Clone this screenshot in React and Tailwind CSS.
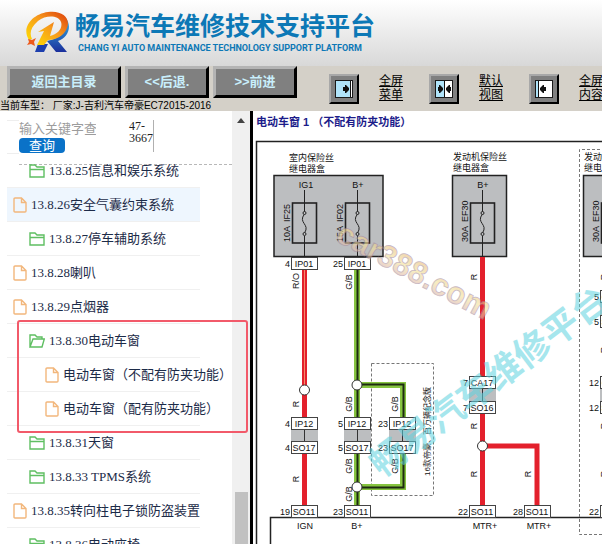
import React from 'react';

const navButtons = ['返回主目录', '<<后退.', '>>前进'];

const viewLinks = [
  { icon: 'menu', lines: ['全屏', '菜单'] },
  { icon: 'split', lines: ['默认', '视图'] },
  { icon: 'content', lines: ['全屏', '内容'] },
];

const treeItems = [
  { label: '13.8.25信息和娱乐系统', icon: 'folder', level: 1 },
  { label: '13.8.26安全气囊约束系统', icon: 'file', level: 0, active: true },
  { label: '13.8.27停车辅助系统', icon: 'folder', level: 1 },
  { label: '13.8.28喇叭', icon: 'file', level: 0 },
  { label: '13.8.29点烟器', icon: 'file', level: 0 },
  { label: '13.8.30电动车窗', icon: 'open', level: 1 },
  { label: '电动车窗（不配有防夹功能）', icon: 'file', level: 2 },
  { label: '电动车窗（配有防夹功能）', icon: 'file', level: 2 },
  { label: '13.8.31天窗', icon: 'folder', level: 1 },
  { label: '13.8.33 TPMS系统', icon: 'folder', level: 1 },
  { label: '13.8.35转向柱电子锁防盗装置', icon: 'file', level: 0 },
  { label: '13.8.36电动座椅', icon: 'folder', level: 1 },
];

const levelPadding = ['pl-[6px]', 'pl-[22px]', 'pl-[38px]'];

const Logo = () => (
  <svg width="47" height="42" viewBox="0 0 47 42" className="shrink-0">
    <defs>
      <linearGradient id="ring" x1="1" y1="0" x2="0" y2="1">
        <stop offset="0" stopColor="#dc3c0a" />
        <stop offset="0.45" stopColor="#f79a1c" />
        <stop offset="1" stopColor="#ffe600" />
      </linearGradient>
      <linearGradient id="leg" x1="0" y1="0" x2="0" y2="1">
        <stop offset="0" stopColor="#35b6e6" />
        <stop offset="1" stopColor="#1b2f9c" />
      </linearGradient>
    </defs>
    <path d="M41 6 C49 15 44 27 34 30 L43 41 H32 L23 30 C36 28 44 18 41 6 Z" fill="url(#leg)" />
    <path d="M14 33 H24 L20 41 H11 Z" fill="#1d3fae" />
    <path
      fillRule="evenodd"
      d="M5 29 C-3 17 8 3 24 1 C38 -1 47 7 43 17 C40 25 32 29 24 29 L20 34 H13 L20 20 L14 21 L30 11 L26 25 C34 23 39 17 37 11 C34 4 22 4 14 10 C7 16 5 22 8 28 Z"
      fill="url(#ring)"
    />
    <path d="M4 28 L8 29 L12 27 L10 31 L11 35 L7 33 L3 34 L5 31 Z" fill="#ee5a1c" />
  </svg>
);

const ViewIcon = ({ type }) => (
  <svg width="18" height="18" viewBox="0 0 18 18">
    <rect x="0.5" y="0.5" width="17" height="17" fill="#fff" stroke="#1a1a1a" />
    {type === 'menu' && (
      <>
        <path d="M1 1H15V17H1Z" fill="#b0e4fa" />
        <path d="M15 1H16V17H15ZM8 7H10V5H11L14 8V10L11 13H10V11H8Z" fill="#111" />
      </>
    )}
    {type === 'split' && (
      <>
        <path d="M1 1H9V17H1Z" fill="#b0e4fa" />
        <path d="M9 1H10V17H9ZM3 7H4V5H5L8 8V10L5 13H4V11H3ZM16 7H15V5H14L11 8V10L14 13H15V11H16Z" fill="#111" />
      </>
    )}
    {type === 'content' && (
      <>
        <path d="M1 1H3V17H1Z" fill="#b0e4fa" />
        <path d="M3 1H4V17H3ZM11 7H9V5H8L5 8V10L8 13H9V11H11Z" fill="#111" />
      </>
    )}
  </svg>
);

const TreeIcon = ({ type }) => {
  if (type === 'file') {
    return (
      <svg width="14" height="16" viewBox="0 0 14 16" fill="none" stroke="#f2b77c" strokeWidth="1.4" className="shrink-0">
        <path d="M2 1H8.5L13 5.5V14Q13 15 12 15H2Q1 15 1 14V2Q1 1 2 1ZM8.5 1V5.5H13" />
      </svg>
    );
  }
  return (
    <svg width="16" height="14" viewBox="0 0 16 14" fill="none" stroke="#5fbf62" strokeWidth="1.4" className="shrink-0">
      {type === 'folder' ? (
        <path d="M1 13V1H6L8 3H15V13ZM1 5.5H15" />
      ) : (
        <path d="M1 13V1H6L8 3H13V5M1 13L4 5H15.3L13 13Z" />
      )}
    </svg>
  );
};

const Toolbar = () => (
  <div className="flex h-[45px] shrink-0 bg-[#d4d0c8]">
    <div className="flex w-[300px] shrink-0 flex-col">
      <div className="flex gap-1 pl-[7px]">
        {navButtons.map((label, i) => (
          <button
            key={label}
            className={`h-8 border-3 border-t-[#b4b4b4] border-r-black border-b-black border-l-[#b4b4b4] bg-[#808080] text-[13px] leading-4 font-bold text-[#c9effc] ${i === 0 ? 'w-[114px]' : 'w-[84px]'}`}
          >
            {label}
          </button>
        ))}
      </div>
      <p className="mt-[2px] text-[10px] leading-[12px] whitespace-pre text-black">当前车型： 厂家:J-吉利汽车帝豪EC72015-2016</p>
    </div>
    <div className="flex min-w-0 flex-1 gap-[26px] overflow-hidden pt-2 pl-[29px]">
      {viewLinks.map(({ icon, lines }) => (
        <a key={icon} href="#" className="flex shrink-0 gap-5">
          <span className="flex h-[30px] w-[30px] items-center justify-center border-2 border-t-[#a8a8a8] border-r-black border-b-black border-l-[#a8a8a8] bg-[#808080]">
            <ViewIcon type={icon} />
          </span>
          <span className="flex w-6 flex-col text-[12px] leading-[14px] text-black underline">
            <span>{lines[0]}</span>
            <span>{lines[1]}</span>
          </span>
        </a>
      ))}
    </div>
  </div>
);

const Sidebar = () => (
  <aside className="relative flex w-[250px] shrink-0 overflow-hidden bg-white font-['Liberation_Serif','Noto_Sans_CJK_SC',serif]">
    <div className="min-w-0 flex-1">
      <form className="flex h-[53px] pt-[9px] pl-[7px]" onSubmit={(e) => e.preventDefault()}>
        <div className="h-[34px] w-3 border-y border-[#eeeeee]"></div>
        <div className="w-[110px]">
          <input
            type="text"
            aria-label="输入关键字查询"
            placeholder="输入关键字查询"
            className="block h-[18px] w-[77px] text-[13px] leading-[18px] outline-none placeholder:text-[#9c9c9c]"
          />
          <button className="block h-[15px] w-[46px] rounded bg-[#0a72c8] text-[13px] leading-[15px] text-white">查询</button>
        </div>
        <p className="h-8 w-[25px] border-r border-[#b0b0b0] text-[12px] leading-[12px] text-[#222]">
          47-
          <br />
          3667
        </p>
      </form>
      <div className="ml-[19px] border-t border-dashed border-[#b8b8b8]"></div>
      <ul className="-mt-[11px] ml-[7px] w-[193px]">
        {treeItems.map(({ label, icon, level, active }) => (
          <li key={label} className={`border-b border-[#f0f0f0] ${active ? 'bg-[#eef6fe]' : ''}`}>
            <a href="#" className={`flex h-[33px] items-center gap-1 text-[13px] whitespace-nowrap text-[#1c2b48] ${levelPadding[level]}`}>
              <TreeIcon type={icon} />
              <span>{label}</span>
            </a>
          </li>
        ))}
      </ul>
    </div>
    <div className="flex w-[18px] flex-col items-center bg-[#f0f0f0] pt-[7px]">
      <svg width="8" height="5" viewBox="0 0 8 5">
        <path d="M0 5L4 0L8 5Z" fill="#444" />
      </svg>
      <div className="mt-[369px] w-[13px] flex-1 bg-[#c1c1c1]"></div>
    </div>
    <div className="pointer-events-none absolute top-[209px] right-[2px] left-[17px] h-[113px] rounded-[3px] border-2 border-[#f25a6a]"></div>
  </aside>
);

const Fuse = ({ x, name, rating }) => (
  <g fill="none" stroke="#222">
    <rect x={x - 12} y="203" width="24" height="40" strokeWidth="1.6" />
    <path d={`M${x} 190V212M${x} 236V257M${x} 214C${x - 7} 223 ${x + 6} 224 ${x} 233`} />
    <circle cx={x} cy="213" r="1.5" fill="#bcbec0" />
    <circle cx={x} cy="234" r="1.5" fill="#bcbec0" />
    <text transform={`translate(${x - 15} 242) rotate(-90)`} fill="#111" stroke="none">{rating}</text>
    <text transform={`translate(${x - 15} 222) rotate(-90)`} fill="#111" stroke="none">{name}</text>
  </g>
);

const Pin = ({ x, y, no, name }) => (
  <g>
    <rect x={x - 12.5} y={y + 0.5} width="26" height="12" fill="#fff" stroke="#444" />
    <text x={x} y={y + 10} textAnchor="middle">{name}</text>
    <text x={x - 14} y={y + 10} textAnchor="end">{no}</text>
  </g>
);

const Joint = ({ x, y }) => (
  <g>
    <rect x={x - 13} y={y} width="27" height="13" fill="#bcbec0" />
    <path d={`M${x + 0.5} ${y}V${y + 13}`} stroke="#333" />
  </g>
);

const Mark = ({ x, y, children }) => (
  <text transform={`translate(${x} ${y}) rotate(-90)`} textAnchor="middle">{children}</text>
);

const pins = [
  [304, 257, '4', 'IP01'], [357, 257, '25', 'IP01'],
  [304, 417, '4', 'IP12'], [357, 417, '5', 'IP12'], [402, 417, '23', 'IP12'],
  [304, 441, '4', 'SO17'], [357, 441, '5', 'SO17'], [402, 441, '23', 'SO17'],
  [304, 505, '19', 'SO11'], [357, 505, '23', 'SO11'],
  [482, 376, '7', 'CA17'], [482, 401, '7', 'SO16'],
  [482, 505, '22', 'SO11'], [537, 505, '28', 'SO11'],
  [613, 290, '5', 'CA01'], [613, 315, '5', 'SO01'],
  [613, 376, '12', 'CA17'], [613, 401, '12', 'SO16'], [613, 505, '22', 'SO11'],
];

const marks = [
  [299, 281, 'R/O'], [352, 282, 'G/B'],
  [299, 404, 'R'], [352, 404, 'G/B'], [398, 404, 'G/B'],
  [299, 479, 'R'], [352, 466, 'G/B'], [398, 466, 'G/B'], [352, 494, 'G/B'],
  [477, 277, 'R'], [477, 426, 'R'], [477, 474, 'R'], [531, 474, 'R'],
  [607, 277, 'R'], [607, 350, 'R'], [607, 426, 'R'], [607, 474, 'R'],
];

const WiringDiagram = () => (
  <svg width="420" height="480" viewBox="253 134 420 480" className="block max-w-none" fontSize="9" fill="#111">
    <defs>
      <linearGradient id="site" x1="0" y1="0" x2="0" y2="1">
        <stop offset="0" stopColor="#e2a86c" />
        <stop offset="0.5" stopColor="#f3e29a" />
        <stop offset="1" stopColor="#cf9bb4" />
      </linearGradient>
    </defs>
    <path d="M256.5 620V141.5H680" fill="none" stroke="#222" strokeWidth="1.5" />
    <path d="M270.5 620V517.5H680" fill="none" stroke="#222" strokeWidth="1.5" />
    <g fill="none" stroke="#777" strokeDasharray="3 2">
      <path d="M680 149.5H579.5V534.5H680" />
      <rect x="371.5" y="363.5" width="62" height="132" />
    </g>

    <text x="289" y="161">室内保险丝</text>
    <text x="289" y="172">继电器盒</text>
    <text x="453" y="160">发动机保险丝</text>
    <text x="453" y="171">继电器盒</text>
    <text x="584" y="160">发动机保险丝</text>
    <text x="584" y="171">继电器盒</text>
    <g fill="#bcbec0" stroke="#222" strokeWidth="1.5">
      <rect x="274" y="175.5" width="109" height="81" />
      <rect x="452.5" y="175.5" width="54" height="81" />
      <rect x="583.5" y="175.5" width="54" height="81" />
    </g>
    <g textAnchor="middle">
      <text x="306" y="188">IG1</text>
      <text x="358" y="188">B+</text>
      <text x="483" y="188">B+</text>
      <text x="613" y="188">B+</text>
      <text x="305" y="529">IGN</text>
      <text x="357" y="529">B+</text>
      <text x="485" y="529">MTR+</text>
      <text x="539" y="529">MTR+</text>
    </g>
    <Fuse x={304.5} rating="10A" name="IF25" />
    <Fuse x={357.5} rating="15A" name="IF02" />
    <Fuse x={482.5} rating="30A" name="EF30" />
    <Fuse x={613.5} rating="30A" name="EF30" />

    <g fill="none" stroke="#e3202c" strokeWidth="5">
      <path d="M304.5 270V505" />
      <path d="M482.5 257V505M482.5 446H537V505" />
      <path d="M613.5 257V505" />
    </g>
    <path d="M304.5 270V385" stroke="#f58a6c" />
    <path d="M357 270V505M357 385H403V487H357" fill="none" stroke="#86c440" strokeWidth="6" />
    <path d="M357.5 270V505M357 384.5H403.5V487.5H357" fill="none" stroke="#1d2a12" strokeWidth="2" />
    <g fill="#fff" stroke="#333">
      <circle cx="304.5" cy="390" r="5" />
      <circle cx="357" cy="385" r="5" />
      <circle cx="357" cy="487" r="5" />
      <circle cx="482.5" cy="446" r="5" />
    </g>
    <Joint x={304} y={429} />
    <Joint x={357} y={429} />
    <Joint x={402} y={429} />
    <Joint x={482} y={389} />
    <Joint x={613} y={303} />
    <Joint x={613} y={389} />
    {pins.map(([x, y, no, name]) => (
      <Pin key={`${x}-${y}`} x={x} y={y} no={no} name={name} />
    ))}
    {marks.map(([x, y, text]) => (
      <Mark key={`${x}-${y}`} x={x} y={y}>{text}</Mark>
    ))}
    <text transform="translate(430 476) rotate(-90)" fontSize="8">16款帝豪、百万辆纪念版</text>

    <text transform="translate(334 240) rotate(28)" fontSize="31" fontWeight="bold" fill="url(#site)" stroke="#a58a9c" strokeWidth="0.8" opacity="0.6">
      car388.com
    </text>
    <text transform="translate(388 457) rotate(-37)" x="-18" y="13" fontSize="36" fontWeight="bold" fill="#5fd3e0" opacity="0.55">
      畅易汽车维修平台
    </text>
  </svg>
);

const App = () => {
  return (
    <div className="flex h-screen flex-col overflow-hidden bg-white font-['Liberation_Sans','Noto_Sans_CJK_SC',sans-serif]">
      <header className="flex h-[66px] shrink-0 items-start gap-1 bg-gradient-to-b from-white to-[#d8d8d8] pt-[11px] pl-6">
        <Logo />
        <div className="whitespace-nowrap text-[#0c78b6]">
          <h1 className="text-[25px] leading-[31px] font-bold">畅易汽车维修技术支持平台</h1>
          <p className="pl-[3px] font-['Roboto','Liberation_Sans',sans-serif] text-[9px] leading-[12px] font-bold">
            CHANG YI AUTO MAINTENANCE TECHNOLOGY SUPPORT PLATFORM
          </p>
        </div>
      </header>
      <Toolbar />
      <div className="flex min-h-0 flex-1">
        <Sidebar />
        <main className="min-w-0 flex-1 overflow-hidden border-l-3 border-black bg-white">
          <h2 className="h-[23px] pt-[3px] pl-[3px] text-[11px] leading-4 font-bold whitespace-nowrap text-[#1c1c8a]">
            电动车窗 1 （不配有防夹功能）
          </h2>
          <WiringDiagram />
        </main>
      </div>
    </div>
  );
};

export default App;
